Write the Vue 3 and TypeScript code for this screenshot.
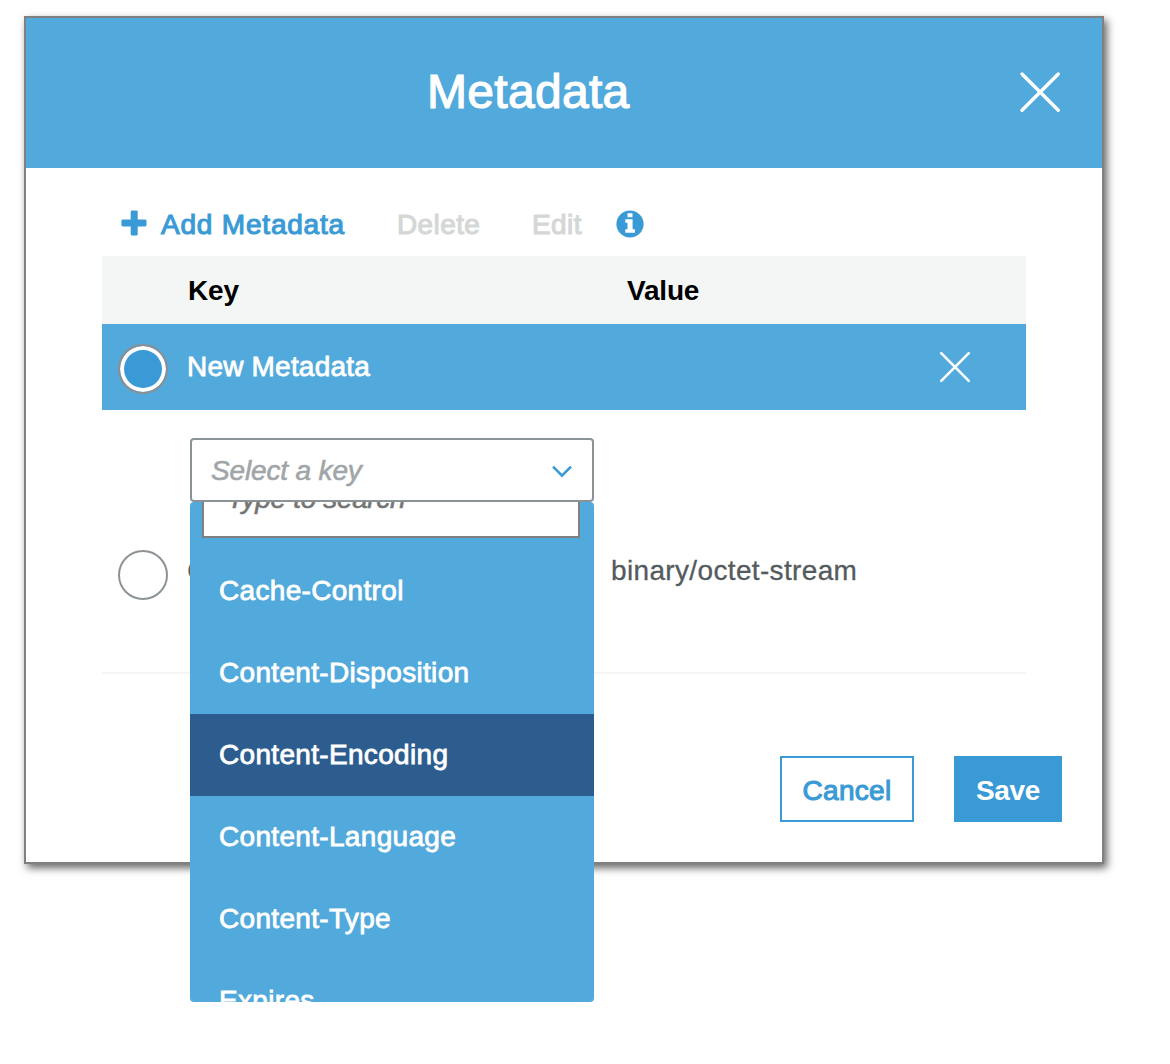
<script setup lang="ts">
import { ref } from 'vue'

const keys: string[] = [
  'Cache-Control',
  'Content-Disposition',
  'Content-Encoding',
  'Content-Language',
  'Content-Type',
  'Expires',
]
const active = ref('Content-Encoding')
</script>

<template>
  <div class="page">
    <section class="modal">
      <header class="head">
        <h1 class="title">Metadata</h1>
        <svg class="close" width="44" height="44" viewBox="0 0 44 44">
          <path d="M4 4L40.300 40.300M40.300 4L4 40.300" />
        </svg>
      </header>

      <div class="toolbar">
        <svg class="plus" width="26" height="26" viewBox="0 0 26 26">
          <path d="M11 .5h4.400q1.300 0 1.300 1.300v7.600h7.200q1.600 0 1.600 1.300v4.400q0 1.300-1.600 1.300h-7.200v7.600q0 1.500-1.300 1.500H11q-1.300 0-1.300-1.500v-7.600H1.900q-1.500 0-1.500-1.300v-4.400q0-1.300 1.500-1.300h7.800V1.800Q9.700 .5 11 .5z" />
        </svg>
        <span class="tool add">Add Metadata</span>
        <span class="tool del">Delete</span>
        <span class="tool edit">Edit</span>
        <svg class="info" width="28" height="28" viewBox="0 0 28 28">
          <circle cx="14" cy="14" r="13.600" fill="#3a9ad5" />
          <path fill="#fff" d="M11.500 3.200h5v4h-5zM9.300 9.300h7.300v9.900h2.300v3.500H9.300v-3.500h2.200v-6.400H9.300z" />
        </svg>
      </div>

      <div class="table">
        <div class="row labels">
          <span class="label-key">Key</span>
          <span class="label-value">Value</span>
        </div>
        <div class="row new">
          <span class="radio on"></span>
          <span class="new-name">New Metadata</span>
          <svg class="remove" width="32" height="32" viewBox="0 0 32 32">
            <path d="M2.200 2.200L29.800 29.800M29.800 2.200L2.200 29.800" />
          </svg>
        </div>
        <div class="row entry">
          <span class="radio"></span>
          <div class="key-cell">
            <div class="select">
              <span class="placeholder">Select a key</span>
              <svg width="22" height="14" viewBox="0 0 22 14">
                <path d="M2 1.700L11 10.600L20 1.700" />
              </svg>
            </div>
            <span class="entry-key">Content-Type</span>
            <div class="menu">
              <div class="search"><span>Type to search</span></div>
              <div
                v-for="k in keys"
                :key="k"
                class="option"
                :class="{ active: k === active }"
                @mouseenter="active = k"
              ><span>{{ k }}</span></div>
            </div>
          </div>
          <span class="entry-value">binary/octet-stream</span>
        </div>
      </div>

      <footer class="actions">
        <button class="btn cancel">Cancel</button>
        <button class="btn save">Save</button>
      </footer>
    </section>
  </div>
</template>

<style>
body {
  margin: 0;
  background: #fff;
}
</style>

<style scoped>
* {
  box-sizing: border-box;
}
.page {
  height: 1064px;
  padding: 16px 0 0 24px;
  overflow: hidden;
  font: 28px/34px "Liberation Sans", Arial, sans-serif;
  color: #545b5e;
}
.modal {
  width: 1080px;
  height: 848px;
  border: 2px solid #808080;
  background: #fff;
  box-shadow: 3px 4px 8px rgba(0, 0, 0, 0.6);
}
.head {
  display: flex;
  align-items: center;
  height: 150px;
  padding: 0 40px 2px 401px;
  background: #52a9db;
  color: #fff;
}
.title {
  flex: 1;
  margin: 0;
  font-size: 48px;
  font-weight: 400;
  line-height: 56px;
  letter-spacing: 0.3px;
  -webkit-text-stroke: 1.2px #fff;
}
.close,
.remove {
  fill: none;
  stroke: #fff;
  stroke-width: 3.4;
  stroke-linecap: round;
}
.remove {
  stroke-width: 2.6;
}
.toolbar {
  display: flex;
  align-items: flex-start;
  height: 88px;
  padding: 39px 0 0 95px;
}
.tool {
  margin-top: 1px;
  color: #3a9ad5;
  -webkit-text-stroke: 1.1px currentColor;
}
.plus {
  margin-top: 3px;
  fill: #3a9ad5;
}
.add {
  width: 236px;
  margin-left: 14px;
  letter-spacing: 0.8px;
}
.del,
.edit {
  color: #d5d7d7;
}
.del {
  width: 135px;
  letter-spacing: 0.4px;
}
.edit {
  width: 84px;
  letter-spacing: 0.4px;
}
.info {
  margin-top: 3px;
}
.table {
  width: 924px;
  margin-left: 76px;
}
.row {
  display: flex;
}
.labels {
  height: 68px;
  padding: 18px 0 0 86px;
  background: #f4f6f5;
  color: #000;
  font-weight: 700;
  letter-spacing: -0.2px;
}
.label-key {
  width: 439px;
}
.new {
  height: 86px;
  padding-left: 16px;
  background: #52a9db;
  color: #fff;
}
.radio {
  flex: none;
  width: 50px;
  height: 50px;
  border: 2px solid #8c9396;
  border-radius: 50%;
}
.radio.on {
  margin-top: 20px;
  border-color: #8b8f92;
  background: #3a9ad5;
  box-shadow: inset 0 0 0 4px #fff;
}
.new-name {
  width: 752px;
  margin: 26px 0 0 19px;
  letter-spacing: 0.2px;
  -webkit-text-stroke: 0.8px #fff;
}
.remove {
  margin-top: 27px;
}
.entry {
  height: 264px;
  padding-left: 16px;
  border-bottom: 2px solid #f4f6f5;
}
.entry .radio {
  margin-top: 140px;
}
.key-cell {
  position: relative;
  width: 404px;
  height: 64px;
  margin: 28px 0 0 22px;
}
.select {
  display: flex;
  align-items: center;
  justify-content: space-between;
  height: 64px;
  padding: 0 19px 0 19px;
  border: 2px solid #8c9396;
  border-radius: 4px;
}
.select svg {
  margin-top: 4px;
  fill: none;
  stroke: #3a9ad5;
  stroke-width: 2.6;
}
.placeholder {
  margin-top: 2px;
  color: #a0a6a7;
  font-style: italic;
  letter-spacing: -0.15px;
  -webkit-text-stroke: 0.6px currentColor;
}
.entry-key {
  position: absolute;
  top: 116px;
  left: -3px;
}
.menu {
  position: absolute;
  top: 64px;
  left: 0;
  width: 404px;
  height: 500px;
  overflow: hidden;
  border-radius: 4px;
  background: #52a9db;
}
.search {
  width: 378px;
  height: 64px;
  margin: -28px 0 12px 12px;
  padding: 6px 0 0 23px;
  border: 2px solid #808080;
  background: #fff;
  color: #757575;
  font-style: italic;
  letter-spacing: -0.35px;
  -webkit-text-stroke: 0.6px currentColor;
}
.option {
  height: 82px;
  padding: 24px 0 0 29px;
  color: #fff;
  letter-spacing: 0.32px;
  -webkit-text-stroke: 0.8px #fff;
}
.option.active {
  background: #2d5d8f;
}
.entry-value {
  margin: 144px 0 0 17px;
  letter-spacing: 0.35px;
  -webkit-text-stroke: 0.3px currentColor;
}
.actions {
  display: flex;
  justify-content: flex-end;
  gap: 40px;
  padding: 82px 40px 0 0;
}
.btn {
  height: 66px;
  padding: 4px 0 0;
  border: 2px solid #3a9ad5;
  font: 28px/34px "Liberation Sans", Arial, sans-serif;
  letter-spacing: 0.3px;
}
.cancel {
  width: 134px;
  background: #fff;
  color: #3a9ad5;
  -webkit-text-stroke: 1.1px currentColor;
}
.save {
  width: 108px;
  background: #3a9ad5;
  color: #fff;
  font-weight: 700;
  letter-spacing: -0.3px;
}
</style>
